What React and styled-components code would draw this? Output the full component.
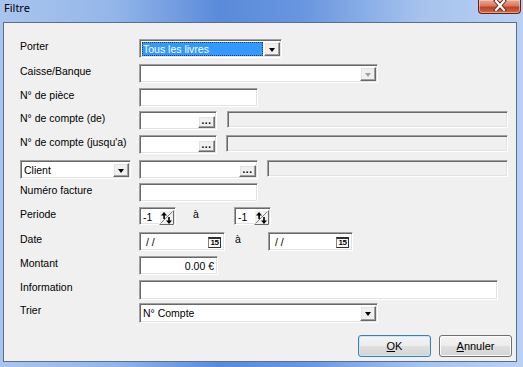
import React from 'react';
import styled, { createGlobalStyle } from 'styled-components';

const GlobalStyle = createGlobalStyle`
  html, body { margin: 0; padding: 0; background: #fff; }
  body { font-family: "Liberation Sans", Arial, sans-serif; font-size: 10.5px; color: #000; }
`;

const Window = styled.div`
  width: 523px;
  height: 367px;
  display: flex;
  flex-direction: column;
  background: linear-gradient(to right, #a9c5ee 0%, #93b6e9 22%, #5a8ada 42%, #6996df 58%, #a5c2ee 80%, #b9d1f3 100%);
`;

const TitleBar = styled.div`
  height: 22px;
  display: flex;
  justify-content: space-between;
  align-items: flex-start;
  flex-shrink: 0;
`;

const Title = styled.div`
  font-family: "Noto Sans", "DejaVu Sans", sans-serif;
  font-size: 11px;
  line-height: 16px;
  padding: 0 0 0 4px;
  color: #000;
`;

const CloseButton = styled.div`
  width: 41px;
  height: 13px;
  margin-right: 2px;
  border: 1px solid #5b2418;
  border-top: none;
  border-radius: 0 0 4px 4px;
  background: linear-gradient(#e9a897 0%, #d8785f 45%, #c0401f 55%, #cf6a48 100%);
  display: flex;
  justify-content: center;
  align-items: flex-start;
  box-shadow: inset 0 0 0 1px rgba(255, 220, 210, 0.5);
`;

const Frame = styled.div`
  flex: 1;
  display: flex;
  padding: 0 6px 5px 3px;
`;

const Panel = styled.div`
  flex: 1;
  background: #f0f0f0;
  border: 1px solid #5c6e8c;
  padding: 16px 0 0 16px;
  display: flex;
  flex-direction: column;
`;

const Row = styled.div`
  height: ${p => p.h}px;
  display: flex;
  align-items: flex-start;
`;

const Label = styled.div`
  width: 119px;
  line-height: 14px;
  white-space: nowrap;
`;

const Sunken = styled.div`
  box-sizing: border-box;
  width: ${p => p.w}px;
  height: ${p => p.h || 19}px;
  border: 1px solid;
  border-color: #a0a0a0 #ffffff #ffffff #a0a0a0;
  box-shadow: inset 1px 1px 0 #696969, inset -1px -1px 0 #e3e3e3;
  background: ${p => (p.disabled ? '#f0f0f0' : '#ffffff')};
  margin-left: ${p => p.ml || 0}px;
  padding: 2px 1px 1px 2px;
  display: flex;
  align-items: stretch;
  line-height: 14px;
`;

const FieldText = styled.div`
  flex: 1;
  padding-left: ${p => p.pl || 1}px;
  padding-right: ${p => p.pr || 0}px;
  text-align: ${p => p.align || 'left'};
  white-space: nowrap;
  overflow: hidden;
`;

const Selected = styled.div`
  flex: 1;
  background: #3399ff;
  color: #fff;
  outline: 1px dotted #1b3a66;
  outline-offset: -1px;
  padding-left: 1px;
  margin-right: 1px;
  white-space: nowrap;
`;

const Raised = styled.div`
  box-sizing: border-box;
  width: ${p => p.w || 16}px;
  border: 1px solid;
  border-color: #ffffff #696969 #696969 #ffffff;
  box-shadow: inset -1px -1px 0 #a0a0a0, inset 1px 1px 0 #e3e3e3;
  background: #f0f0f0;
  display: flex;
  justify-content: center;
  align-items: center;
  margin-top: ${p => p.mt || 0}px;
`;

const Arrow = styled.span`
  width: 0;
  height: 0;
  border-left: 3.5px solid transparent;
  border-right: 3.5px solid transparent;
  border-top: 4px solid ${p => (p.disabled ? '#a0a0a0' : '#000')};
  margin-top: 1px;
`;

const Dots = styled.span`
  font-weight: bold;
  font-size: 10px;
  letter-spacing: 0.5px;
  line-height: 8px;
  margin-top: -2px;
`;

const Sep = styled.div`
  width: ${p => p.w}px;
  padding-left: ${p => p.indent}px;
  box-sizing: border-box;
  line-height: 14px;
`;

const CalIcon = styled.div`
  box-sizing: border-box;
  width: 13px;
  height: 11px;
  margin: 2px 2px 0 0;
  border: 1px solid #303030;
  border-top-width: 2px;
  border-left-color: #808080;
  background: #fff;
  font-size: 8px;
  line-height: 8px;
  font-weight: bold;
  text-align: center;
  letter-spacing: -0.5px;
`;

const Buttons = styled.div`
  display: flex;
  justify-content: flex-end;
  gap: 8px;
  padding-right: 4px;
`;

const Button = styled.div`
  box-sizing: border-box;
  width: 73px;
  height: 22px;
  font-size: 11px;
  border: 1px solid ${p => (p.primary ? '#3c7fb1' : '#707070')};
  border-radius: 3px;
  background: linear-gradient(#f4f4f4 0%, #ececec 48%, #dfdfdf 52%, #d4d4d4 100%);
  box-shadow: inset 0 0 0 1px ${p => (p.primary ? '#c8e8f8' : '#fbfbfb')};
  display: flex;
  justify-content: center;
  align-items: center;
  u { text-decoration: underline; }
`;

const ComboBox = ({ w, h, selected, disabled, children }) => (
  <Sunken w={w} h={h}>
    {selected ? <Selected>{children}</Selected> : <FieldText>{children}</FieldText>}
    <Raised>
      <Arrow disabled={disabled} />
    </Raised>
  </Sunken>
);

const Lookup = ({ w }) => (
  <Sunken w={w}>
    <FieldText />
    <Raised w={17} mt={2}>
      <Dots>...</Dots>
    </Raised>
  </Sunken>
);

const SpinIcon = () => (
  <svg width="15" height="15" viewBox="0 0 15 15">
    <rect x="0" y="0" width="15" height="15" fill="#f0f0f0" />
    <path d="M0.5 14.5 V0.5 H14.5" stroke="#ffffff" fill="none" />
    <path d="M0.5 14.5 H14.5 V0.5" stroke="#696969" fill="none" />
    <path d="M1.5 13.5 L13.5 1.5" stroke="#808080" />
    <path d="M2 5.5 L5 2 L8 5.5 Z" fill="#000" />
    <rect x="4.3" y="5" width="1.6" height="4" fill="#000" />
    <rect x="9.2" y="7" width="1.6" height="4" fill="#000" />
    <path d="M7 10.5 L10 14 L13 10.5 Z" fill="#000" />
  </svg>
);

const Spin = () => (
  <Sunken w={37} h={18}>
    <FieldText>-1</FieldText>
    <SpinIcon />
  </Sunken>
);

const DateBox = ({ w }) => (
  <Sunken w={w}>
    <FieldText pl={4}>/ /</FieldText>
    <CalIcon>15</CalIcon>
  </Sunken>
);

const App = () => (
  <Window>
    <GlobalStyle />
    <TitleBar>
      <Title>Filtre</Title>
      <CloseButton>
        <svg width="14" height="11" viewBox="0 0 14 11">
          <path d="M3 1 L11 10 M11 1 L3 10" stroke="#5b2418" strokeWidth="4" strokeLinecap="square" />
          <path d="M3 1 L11 10 M11 1 L3 10" stroke="#ffffff" strokeWidth="2.2" strokeLinecap="square" />
        </svg>
      </CloseButton>
    </TitleBar>
    <Frame>
      <Panel>
        <Row h={25}>
          <Label>Porter</Label>
          <ComboBox w={143} selected>Tous les livres</ComboBox>
        </Row>
        <Row h={24}>
          <Label>Caisse/Banque</Label>
          <ComboBox w={239} disabled />
        </Row>
        <Row h={23}>
          <Label>N° de pièce</Label>
          <Sunken w={119} />
        </Row>
        <Row h={24}>
          <Label>N° de compte (de)</Label>
          <Lookup w={78} />
          <Sunken w={281} h={17} ml={10} disabled />
        </Row>
        <Row h={25}>
          <Label>N° de compte (jusqu'a)</Label>
          <Lookup w={78} />
          <Sunken w={282} h={17} ml={9} disabled />
        </Row>
        <Row h={23}>
          <Label>
            <ComboBox w={111} h={19}>Client</ComboBox>
          </Label>
          <Lookup w={119} />
          <Sunken w={241} h={17} ml={9} disabled />
        </Row>
        <Row h={24}>
          <Label>Numéro facture</Label>
          <Sunken w={119} />
        </Row>
        <Row h={25}>
          <Label>Periode</Label>
          <Spin />
          <Sep w={58} indent={17}>à</Sep>
          <Spin />
        </Row>
        <Row h={24}>
          <Label>Date</Label>
          <DateBox w={86} />
          <Sep w={43} indent={10}>à</Sep>
          <DateBox w={85} />
        </Row>
        <Row h={24}>
          <Label>Montant</Label>
          <Sunken w={79}>
            <FieldText align="right" pr={2}>0.00 €</FieldText>
          </Sunken>
        </Row>
        <Row h={23}>
          <Label>Information</Label>
          <Sunken w={359} h={20} />
        </Row>
        <Row h={32}>
          <Label>Trier</Label>
          <ComboBox w={239} h={20}>N° Compte</ComboBox>
        </Row>
        <Buttons>
          <Button primary>
            <span><u>O</u>K</span>
          </Button>
          <Button>
            <span><u>A</u>nnuler</span>
          </Button>
        </Buttons>
      </Panel>
    </Frame>
  </Window>
);

export default App;
